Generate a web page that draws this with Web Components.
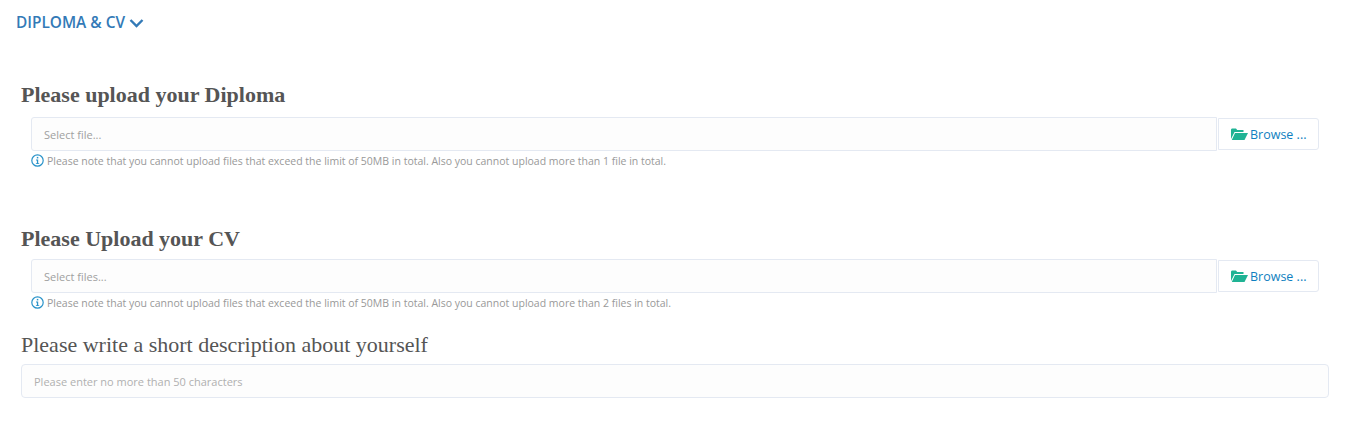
<!DOCTYPE html>
<html>
<head>
<meta charset="utf-8">
<title>Diploma &amp; CV</title>
<style>
  html, body { margin: 0; background: #fff; }
</style>
</head>
<body>
<template id="section-tpl">
  <style>
    :host { display: block; padding: 13px 18px 0 16px; font-family: "Open Sans", sans-serif; }
    #toggle { display: flex; align-items: center; gap: 4px; height: 18px; color: #337ab7; font-size: 15.4px; font-weight: 600; }
    #toggle svg { display: block; margin-top: 1px; }
    #body { display: block; padding: 50px 0 0 5px; }
  </style>
  <div id="toggle"><span id="title"></span>
    <svg width="15" height="10" viewBox="0 0 15 10"><path d="M1.5 2 7.5 8 13.5 2" fill="none" stroke="#337ab7" stroke-width="2.4"/></svg>
  </div>
  <div id="body"><slot></slot></div>
</template>

<template id="upload-tpl">
  <style>
    :host { display: block; padding-right: 10px; font-family: "Open Sans", sans-serif; }
    h3 { margin: 0; padding-bottom: 2px; font: bold 22px/28px "Liberation Serif", serif; color: #555; }
    #row { display: flex; gap: 1px; margin: var(--row-gap, 6px) 0 0 10px; align-items: center; }
    #caption { flex: 1; box-sizing: border-box; height: 34px; padding: 0 12px; display: flex; align-items: center; background: #fdfdfd; border: 1px solid #e4e9f2; border-radius: 3px 0 0 3px; font-size: 11px; color: #a0a0a0; }
    button { box-sizing: border-box; width: 101px; height: 32px; margin: 0; padding: 0 0 0 12px; display: flex; align-items: center; gap: 2px; background: #fff; border: 1px solid #e4e9f2; border-radius: 0 3px 3px 0; font: 12.5px "Open Sans", sans-serif; color: #0f7fc0; }
    #note { display: flex; align-items: center; gap: 3px; margin: 1px 0 0 10px; height: 17px; font-size: 10.5px; color: #999; white-space: nowrap; }
    svg { display: block; flex: none; }
  </style>
  <h3 id="heading"></h3>
  <div id="row">
    <div id="caption"></div>
    <button type="button">
      <svg width="17" height="12" viewBox="0 0 17 12"><path d="M0 11V1.5L.8.5H5L6.2 2H12.5V4H3.5Z" fill="#1fb394"/><path d="M4 5H17L13.5 12H.8Z" fill="#1fb394"/></svg>
      <span>Browse ...</span>
    </button>
  </div>
  <div id="note">
    <svg width="13" height="13" viewBox="0 0 13 13"><circle cx="6.5" cy="6.5" r="5.7" fill="none" stroke="#2a93c9" stroke-width="1.2"/><rect x="5.8" y="2.9" width="1.5" height="1.5" fill="#2a93c9"/><path d="M5 5.6H7.2V9.2H8.2V10H4.9V9.2H5.9V6.4H5Z" fill="#2a93c9"/></svg>
    <span id="msg"></span>
  </div>
</template>

<template id="text-tpl">
  <style>
    :host { display: block; font-family: "Open Sans", sans-serif; }
    h3 { margin: 0; font: normal 22px/28px "Liberation Serif", serif; color: #555; }
    #input { box-sizing: border-box; height: 34px; margin-top: 5px; padding: 0 12px; display: flex; align-items: center; background: #fdfdfd; border: 1px solid #e4e9f2; border-radius: 4px; font-size: 11px; color: #b0b0b0; }
  </style>
  <h3 id="heading"></h3>
  <div id="input"></div>
</template>

<diploma-section title="DIPLOMA &amp; CV">
  <file-upload heading="Please upload your Diploma" placeholder="Select file..." limit="1 file"></file-upload>
  <file-upload style="margin-top:56px;--row-gap:4px" heading="Please Upload your CV" placeholder="Select files..." limit="2 files"></file-upload>
  <text-field style="margin-top:20px" heading="Please write a short description about yourself" placeholder="Please enter no more than 50 characters"></text-field>
</diploma-section>

<script>
  function stamp(el, id) {
    const root = el.attachShadow({mode: 'open'});
    root.appendChild(document.getElementById(id).content.cloneNode(true));
    return root;
  }

  class DiplomaSection extends HTMLElement {
    connectedCallback() {
      const root = stamp(this, 'section-tpl');
      root.querySelector('#title').textContent = this.getAttribute('title');
      this.removeAttribute('title');
    }
  }

  class FileUpload extends HTMLElement {
    connectedCallback() {
      const root = stamp(this, 'upload-tpl');
      root.querySelector('#heading').textContent = this.getAttribute('heading');
      root.querySelector('#caption').textContent = this.getAttribute('placeholder');
      root.querySelector('#msg').textContent = `Please note that you cannot upload files that exceed the limit of 50MB in total. Also you cannot upload more than ${this.getAttribute('limit')} in total.`;
    }
  }

  class TextField extends HTMLElement {
    connectedCallback() {
      const root = stamp(this, 'text-tpl');
      root.querySelector('#heading').textContent = this.getAttribute('heading');
      root.querySelector('#input').textContent = this.getAttribute('placeholder');
    }
  }

  customElements.define('diploma-section', DiplomaSection);
  customElements.define('file-upload', FileUpload);
  customElements.define('text-field', TextField);
</script>
</body>
</html>
